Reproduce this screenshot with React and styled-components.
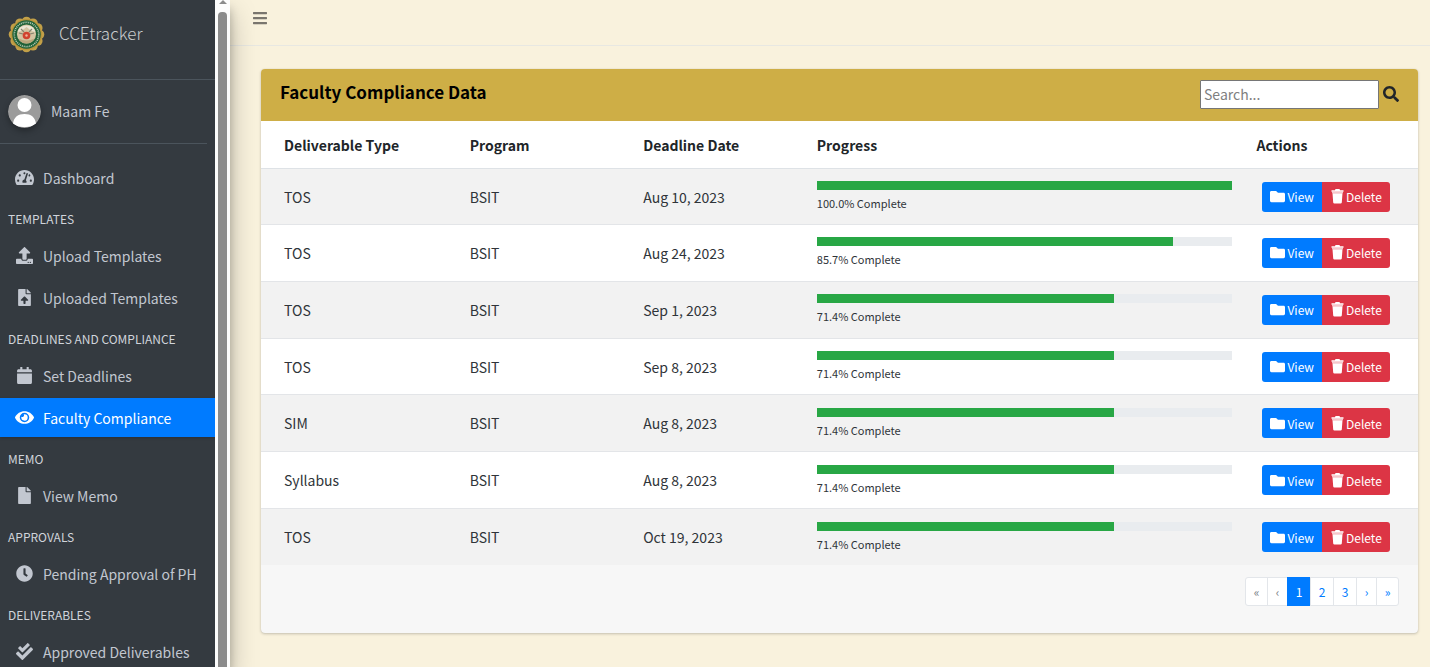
import React from 'react';
import styled, { createGlobalStyle, css } from 'styled-components';
import {
  FaTachometerAlt, FaUpload, FaFileUpload, FaCalendar, FaEye, FaFile,
  FaClock, FaCheckDouble, FaSearch, FaBars, FaFolder,
} from 'react-icons/fa';

const GlobalStyle = createGlobalStyle`
  *, *::before, *::after { box-sizing: border-box; }
  body {
    margin: 0;
    background: #f9f2dd;
    color: #212529;
    font-family: "Noto Sans CJK SC", "Noto Sans", sans-serif;
    font-size: 14px;
    line-height: 22px;
  }
  button, input { font-family: inherit; }
`;

const Shell = styled.div`
  display: flex;
  height: 100vh;
  overflow: hidden;
`;

const Sidebar = styled.aside`
  display: flex;
  flex: 0 0 230px;
  z-index: 1;
  background: #343a40;
  box-shadow: 0 13px 26px rgba(0, 0, 0, 0.25), 0 9px 9px rgba(0, 0, 0, 0.22);
`;

const SidebarBody = styled.div`
  flex: 1;
  min-width: 0;
  overflow: hidden;
  color: #c2c7d0;
`;

const Scrollbar = styled.div`
  display: flex;
  flex-direction: column;
  align-items: center;
  flex: 0 0 15px;
  background: #fcfcfc;
`;

const ScrollArrow = styled.svg`
  flex: none;
  display: block;
  width: 10px;
  height: 5px;
  margin-bottom: 7px;
`;

const ScrollThumb = styled.div`
  flex: 1;
  width: 9px;
  border-radius: 4px 4px 0 0;
  background: #8b8b8b;
`;

const Brand = styled.a`
  display: flex;
  align-items: flex-start;
  gap: 14px;
  height: 80px;
  padding: 16px 8px 0;
  border-bottom: 1px solid #4b545c;
  color: #c9ccce;
  font-size: 17px;
  font-weight: 300;
  line-height: 34px;
  text-decoration: none;
`;

const Seal = styled.svg`
  width: 37px;
  height: 37px;
`;

const UserPanel = styled.div`
  display: flex;
  align-items: center;
  gap: 10px;
  height: 64px;
  margin: 0 8px 14px 0;
  padding-left: 8px;
  border-bottom: 1px solid #4b545c;
`;

const Avatar = styled.svg`
  width: 33px;
  height: 33px;
  border-radius: 50%;
  box-shadow: 0 3px 6px rgba(0, 0, 0, 0.3);
`;

const UserLink = styled.a`
  padding-bottom: 2px;
  color: inherit;
  text-decoration: none;
`;

const NavHeading = styled.h2`
  margin: 0;
  padding: 12px 8px 7px;
  font-size: 12px;
  font-weight: 400;
  line-height: 20px;
  color: #d0d4db;
`;

const NavLink = styled.a`
  display: flex;
  align-items: center;
  gap: 9px;
  height: 39px;
  padding: 0 15px;
  margin-bottom: ${({ $stacked }) => ($stacked ? '3px' : '0')};
  color: inherit;
  text-decoration: none;
  white-space: nowrap;
  ${({ $active }) => $active && css`
    background: #007bff;
    color: #fff;
    box-shadow: 0 1px 3px rgba(0, 0, 0, 0.2);
  `}
  svg {
    flex: none;
    width: 19px;
    height: ${({ $wide }) => ($wide ? '19px' : '17px')};
  }
`;

const Page = styled.div`
  flex: 1;
  min-width: 0;
`;

const Topbar = styled.header`
  height: 46px;
  padding: 8px 20px;
  border-bottom: 1px solid #e8e8e2;
`;

const MenuButton = styled.button`
  display: flex;
  align-items: center;
  justify-content: center;
  width: 19px;
  height: 19px;
  padding: 0;
  border: 0;
  background: none;
  color: #7a766e;
  font-size: 16px;
`;

const Main = styled.main`
  padding: 23px 12px 0 31px;
`;

const Card = styled.section`
  border-radius: 4px;
  background: #f7f7f7;
  box-shadow: 0 0 1px rgba(0, 0, 0, 0.13), 0 1px 3px rgba(0, 0, 0, 0.2);
  overflow: hidden;
`;

const CardHeader = styled.div`
  display: flex;
  justify-content: space-between;
  height: 52px;
  padding: 11px 19px;
  background: #ceae46;
`;

const CardTitle = styled.h1`
  margin: 0;
  color: #000;
  font-size: 17px;
  font-weight: 700;
  line-height: 24px;
`;

const SearchForm = styled.form`
  display: flex;
  align-items: flex-start;
  gap: 4px;
`;

const SearchInput = styled.input`
  width: 179px;
  height: 29px;
  padding: 0 3px 2px;
  border: 1px solid #767676;
  border-radius: 1px;
  background: #fff;
  color: #212529;
  font-size: 14px;
  &::placeholder { color: #808080; opacity: 1; }
`;

const SearchButton = styled.button`
  display: flex;
  margin-top: 6px;
  padding: 0;
  border: 0;
  background: none;
  color: #212529;
  font-size: 16px;
`;

const Table = styled.table`
  width: 100%;
  height: 444px;
  table-layout: fixed;
  border-collapse: separate;
  border-spacing: 0;
  background: #fff;
`;

const HeadCell = styled.th`
  width: ${({ $width }) => $width};
  height: 48px;
  padding: 0 12px;
  border-bottom: 1px solid #dee2e6;
  text-align: left;
  font-weight: 700;
  &:first-child { padding-left: 23px; }
`;

const Row = styled.tr`
  &:nth-child(odd) { background: #f2f2f2; }
  &:not(:first-child) td { border-top: 1px solid #e3e5e8; }
`;

const Cell = styled.td`
  padding: 0 12px;
  color: #2f3439;
  &:first-child { padding-left: 23px; }
`;

const Track = styled.div`
  height: 9px;
  background: #e9ecef;
`;

const Fill = styled.div`
  height: 100%;
  background: #28a745;
`;

const Caption = styled.small`
  display: block;
  padding-top: 4px;
  font-size: 11px;
  line-height: 18px;
`;

const ButtonGroup = styled.div`
  display: flex;
  margin-left: 6px;
  border-radius: 3px;
  overflow: hidden;
  width: max-content;
`;

const ActionButton = styled.button`
  display: flex;
  align-items: center;
  gap: ${({ $danger }) => ($danger ? '1px' : '2px')};
  height: 30px;
  padding: 0 8px;
  border: 0;
  background: ${({ $danger }) => ($danger ? '#dc3545' : '#007bff')};
  color: #fff;
  font-size: 12px;
  svg { width: 15px; height: 15px; }
`;

const CardFooter = styled.nav`
  display: flex;
  justify-content: flex-end;
  height: 68px;
  padding: 12px 19px 0;
`;

const PageList = styled.ul`
  display: flex;
  height: 29px;
  margin: 0;
  padding: 0;
  list-style: none;
  li:first-child a { border-radius: 3px 0 0 3px; }
  li:last-child a { border-radius: 0 3px 3px 0; }
`;

const stepWidths = { double: '23px', single: '21px', number: '24px' };

const PageLink = styled.a`
  display: block;
  width: ${({ $kind }) => stepWidths[$kind]};
  height: 29px;
  margin-left: -1px;
  border: 1px solid ${({ $current }) => ($current ? '#007bff' : '#e3e6ea')};
  background: ${({ $current }) => ($current ? '#007bff' : '#fff')};
  color: ${({ $current, $muted }) => ($current ? '#fff' : $muted ? '#7b8188' : '#007bff')};
  font-size: 12px;
  line-height: 27px;
  text-align: center;
  text-decoration: none;
`;

const nav = [
  { label: 'Dashboard', Icon: FaTachometerAlt, wide: true },
  { heading: 'TEMPLATES' },
  { label: 'Upload Templates', Icon: FaUpload, stacked: true },
  { label: 'Uploaded Templates', Icon: FaFileUpload },
  { heading: 'DEADLINES AND COMPLIANCE' },
  { label: 'Set Deadlines', Icon: FaCalendar, stacked: true },
  { label: 'Faculty Compliance', Icon: FaEye, wide: true, active: true },
  { heading: 'MEMO' },
  { label: 'View Memo', Icon: FaFile },
  { heading: 'APPROVALS' },
  { label: 'Pending Approval of PH', Icon: FaClock },
  { heading: 'DELIVERABLES' },
  { label: 'Approved Deliverables', Icon: FaCheckDouble },
];

const columns = [
  ['Deliverable Type', '17%'],
  ['Program', '15%'],
  ['Deadline Date', '15%'],
  ['Progress', '38%'],
  ['Actions', '15%'],
];

const rows = [
  ['TOS', 'BSIT', 'Aug 10, 2023', '100.0'],
  ['TOS', 'BSIT', 'Aug 24, 2023', '85.7'],
  ['TOS', 'BSIT', 'Sep 1, 2023', '71.4'],
  ['TOS', 'BSIT', 'Sep 8, 2023', '71.4'],
  ['SIM', 'BSIT', 'Aug 8, 2023', '71.4'],
  ['Syllabus', 'BSIT', 'Aug 8, 2023', '71.4'],
  ['TOS', 'BSIT', 'Oct 19, 2023', '71.4'],
];

const pages = [
  { text: '«', label: 'First', kind: 'double', muted: true },
  { text: '‹', label: 'Previous', kind: 'single', muted: true },
  { text: '1', kind: 'number', current: true },
  { text: '2', kind: 'number' },
  { text: '3', kind: 'number' },
  { text: '›', label: 'Next', kind: 'single' },
  { text: '»', label: 'Last', kind: 'double' },
];

const petals = Array.from({ length: 12 }, (_, i) => (i * Math.PI) / 6);

function SchoolSeal() {
  return (
    <Seal viewBox="0 0 37 37" aria-hidden="true">
      {petals.map((a) => (
        <circle key={a} cx={18.5 + 13 * Math.sin(a)} cy={18.5 - 13 * Math.cos(a)} r="4.8" fill="#c2a048" />
      ))}
      <circle cx="18.5" cy="18.5" r="15.4" fill="#b8923c" />
      <circle cx="18.5" cy="18.5" r="14.2" fill="#1f6138" />
      <circle cx="18.5" cy="18.5" r="12.2" fill="none" stroke="#b9cdb8" strokeWidth="1.6" strokeDasharray="1 0.9" />
      <circle cx="18.5" cy="18.5" r="10.4" fill="#1f6138" />
      <circle cx="18.5" cy="18" r="9.6" fill="#d3c4a2" />
      <path d="M9.500 16a9.500 9.500 0 0 1 18 0l-4-1-5-4-5 4z" fill="#ebe5d4" />
      <path d="M11 17l4 1M26 17l-4 1M13 13l3 3M24 13l-3 3" stroke="#85836e" strokeWidth="1.2" />
      <path d="M10.500 22.500q8 4 16 0-2.500 5-8 5t-8-5z" fill="#b9a67c" />
      <circle cx="18.5" cy="19.500" r="3.800" fill="#d0432f" />
      <circle cx="18.5" cy="19.500" r="1.200" fill="#efb59a" />
    </Seal>
  );
}

function TrashIcon() {
  return (
    <svg viewBox="0 0 15 15" aria-hidden="true" fill="#fff">
      <path d="M5.500 0h4l.5 1.200h3.500v1.600h-12V1.200H5z" />
      <path d="M2 2.800h11v1.400H2z" opacity="0.72" />
      <path d="M2.500 4.200h10l-.7 9.300a1.200 1.200 0 0 1-1.200 1H4.400a1.200 1.200 0 0 1-1.200-1z" />
    </svg>
  );
}

export default function App() {
  return (
    <>
      <GlobalStyle />
      <Shell>
        <Sidebar>
          <SidebarBody>
            <Brand href="#home"><SchoolSeal />CCEtracker</Brand>
            <UserPanel>
              <Avatar viewBox="0 0 33 33" aria-hidden="true">
                <circle cx="16.5" cy="16.5" r="16.5" fill="#9b9b9b" />
                <circle cx="16.5" cy="10" r="7" fill="#fff" />
                <path d="M5 28.500C6 22 10 19 16.500 19s10.500 3 11.500 9.500A16.500 16.500 0 0 1 16.500 32 16.500 16.500 0 0 1 5 28.500z" fill="#fff" />
              </Avatar>
              <UserLink href="#profile">Maam Fe</UserLink>
            </UserPanel>
            <nav>
              {nav.map(({ heading, label, Icon, wide, active, stacked }) => (heading ? (
                <NavHeading key={heading}>{heading}</NavHeading>
              ) : (
                <NavLink key={label} href="#section" $wide={wide} $active={active} $stacked={stacked}>
                  <Icon aria-hidden="true" />
                  {label}
                </NavLink>
              )))}
            </nav>
          </SidebarBody>
          <Scrollbar aria-hidden="true">
            <ScrollArrow viewBox="0 0 10 5"><path d="M5 0 9 4H1z" fill="#8b8b8b" /></ScrollArrow>
            <ScrollThumb />
          </Scrollbar>
        </Sidebar>
        <Page>
          <Topbar>
            <MenuButton type="button" aria-label="Toggle menu"><FaBars /></MenuButton>
          </Topbar>
          <Main>
            <Card>
              <CardHeader>
                <CardTitle>Faculty Compliance Data</CardTitle>
                <SearchForm role="search" onSubmit={(e) => e.preventDefault()}>
                  <SearchInput type="text" placeholder="Search..." aria-label="Search" />
                  <SearchButton type="submit" aria-label="Submit search"><FaSearch /></SearchButton>
                </SearchForm>
              </CardHeader>
              <Table>
                <thead>
                  <tr>
                    {columns.map(([name, width]) => <HeadCell key={name} scope="col" $width={width}>{name}</HeadCell>)}
                  </tr>
                </thead>
                <tbody>
                  {rows.map(([type, program, date, percent]) => (
                    <Row key={`${type}-${date}`}>
                      <Cell>{type}</Cell>
                      <Cell>{program}</Cell>
                      <Cell>{date}</Cell>
                      <Cell>
                        <Track><Fill style={{ width: `${percent}%` }} /></Track>
                        <Caption>{`${percent}% Complete`}</Caption>
                      </Cell>
                      <Cell>
                        <ButtonGroup>
                          <ActionButton type="button"><FaFolder aria-hidden="true" />View</ActionButton>
                          <ActionButton type="button" $danger><TrashIcon />Delete</ActionButton>
                        </ButtonGroup>
                      </Cell>
                    </Row>
                  ))}
                </tbody>
              </Table>
              <CardFooter aria-label="Pagination">
                <PageList>
                  {pages.map(({ text, label, kind, muted, current }) => (
                    <li key={text}>
                      <PageLink href="#page" aria-label={label} aria-current={current && 'page'} $kind={kind} $muted={muted} $current={current}>{text}</PageLink>
                    </li>
                  ))}
                </PageList>
              </CardFooter>
            </Card>
          </Main>
        </Page>
      </Shell>
    </>
  );
}
